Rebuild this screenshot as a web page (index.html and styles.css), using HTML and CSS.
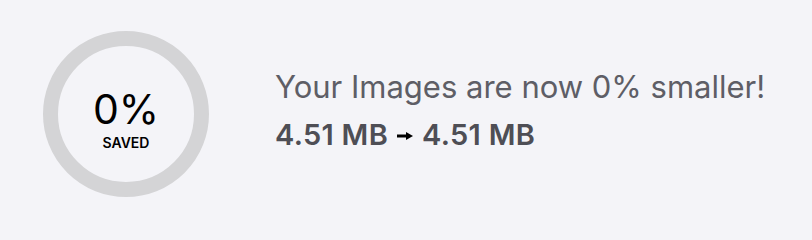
FILE: index.html
```html
<!DOCTYPE html>
<html>
<head>
<meta charset="utf-8">
<link rel="stylesheet" href="styles.css">
</head>
<body>
<div class="result">
  <div class="ring">
    <div class="pct">0%</div>
    <div class="saved">SAVED</div>
  </div>
  <div class="info">
    <div class="headline">Your Images are now 0% smaller!</div>
    <div class="sizes">
      <span>4.51 MB</span>
      <svg class="arrow" width="16" height="10" viewBox="0 0 16 10"><path d="M0 5H10" stroke="#000" stroke-width="3"/><path d="M9 1L16 5L9 9Z" fill="#000"/></svg>
      <span>4.51 MB</span>
    </div>
  </div>
</div>
</body>
</html>
```
FILE: styles.css
```css
html, body {
  margin: 0;
  padding: 0;
  background: #f4f4f8;
}
body {
  width: 812px;
  height: 240px;
  font-family: Inter, "Noto Sans", sans-serif;
}
.result {
  display: flex;
  align-items: center;
  padding: 31px 0 0 43px;
  gap: 66px;
}
.ring {
  width: 166px;
  height: 166px;
  box-sizing: border-box;
  border: 15px solid #d4d4d6;
  border-radius: 50%;
  display: flex;
  flex-direction: column;
  align-items: center;
  justify-content: center;
  padding-top: 12px;
  color: #000;
}
.pct {
  font-size: 41px;
  line-height: 40px;
  font-weight: 400;
}
.saved {
  font-size: 14px;
  line-height: 16px;
  font-weight: 600;
  margin-top: 6px;
}
.info {
  display: flex;
  flex-direction: column;
  margin-top: -7px;
}
.headline {
  font-size: 31px;
  line-height: 36px;
  color: #5e5e66;
  font-weight: 400;
}
.sizes {
  display: flex;
  align-items: center;
  gap: 9px;
  font-size: 29px;
  line-height: 36px;
  color: #4e4e55;
  font-weight: 600;
  letter-spacing: 0.3px;
  margin-top: 12px;
}
.arrow {
  margin-top: 2px;
}
```
